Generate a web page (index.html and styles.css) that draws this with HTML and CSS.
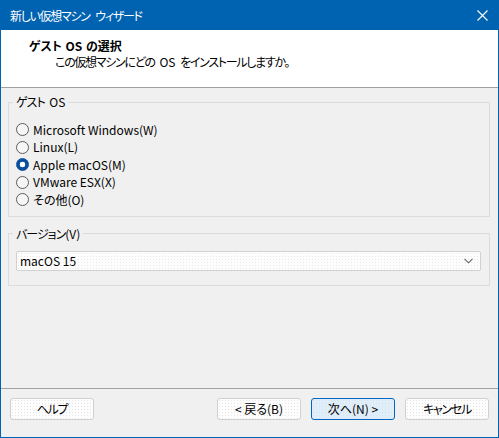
FILE: index.html
```html
<!DOCTYPE html>
<html lang="ja">
<head>
<meta charset="utf-8">
<title>新しい仮想マシン ウィザード</title>
<link rel="stylesheet" href="styles.css">
</head>
<body>
<div class="window">
  <div class="titlebar">
    <span class="title"><span class="jp">新しい仮想マシン</span> <span class="jp">ウィザード</span></span>
    <svg class="close" width="11" height="11" viewBox="0 0 11 11"><path d="M0.5 0.5 L10.5 10.5 M10.5 0.5 L0.5 10.5" stroke="#fff" stroke-width="1.1" fill="none"/></svg>
  </div>
  <div class="header">
    <div class="h-title">ゲスト OS の選択</div>
    <div class="h-sub"><span class="jp">この仮想マシンにどの</span> OS <span class="jp">をインストールしますか。</span></div>
  </div>
  <div class="content">
    <fieldset class="group group-os">
      <legend><span class="jp-s">ゲスト</span> OS</legend>
      <div class="radios">
        <div class="radio-row"><span class="radio"></span><span>Microsoft Windows(W)</span></div>
        <div class="radio-row"><span class="radio"></span><span>Linux(L)</span></div>
        <div class="radio-row"><span class="radio checked"></span><span>Apple macOS(M)</span></div>
        <div class="radio-row"><span class="radio"></span><span>VMware ESX(X)</span></div>
        <div class="radio-row"><span class="radio"></span><span>その他(O)</span></div>
      </div>
    </fieldset>
    <fieldset class="group group-ver">
      <legend><span class="jp-s">バージョン</span>(V)</legend>
      <div class="combo">
        <span>macOS 15</span>
        <svg class="chev" width="9" height="6" viewBox="0 0 9 6"><path d="M0.5 0.8 L4.5 4.8 L8.5 0.8" stroke="#606060" stroke-width="1.1" fill="none"/></svg>
      </div>
    </fieldset>
  </div>
  <div class="footer">
    <button class="btn"><span class="jp">ヘルプ</span></button>
    <div class="spacer"></div>
    <button class="btn">&lt; 戻る(B)</button>
    <button class="btn primary">次へ(N) &gt;</button>
    <button class="btn"><span class="jp">キャンセル</span></button>
  </div>
</div>
</body>
</html>
```

FILE: styles.css
```css
html, body {
  margin: 0;
  padding: 0;
  background: #ffffff;
}
body {
  font-family: "Noto Sans CJK JP", "Noto Sans", sans-serif;
  font-size: 12px;
  font-feature-settings: "palt";
  color: #000;
}
.jp {
  letter-spacing: -1.3px;
}
.jp-s {
  letter-spacing: -1px;
}
.window {
  width: 499px;
  height: 438px;
  box-sizing: border-box;
  border: 1px solid #0063b1;
  background: #f0f0f0;
  display: flex;
  flex-direction: column;
}
.titlebar {
  height: 29px;
  flex: none;
  background: #0063b1;
  color: #fff;
  display: flex;
  align-items: center;
  padding-left: 9px;
  padding-right: 10px;
}
.title {
  flex: 1;
  line-height: 16px;
  word-spacing: 3px;
}
.close {
  display: block;
}
.header {
  flex: none;
  box-sizing: border-box;
  height: 58px;
  background: #fff;
  border-bottom: 1px solid #a0a0a0;
  padding-top: 8px;
}
.h-title {
  font-weight: bold;
  line-height: 16px;
  padding-left: 28px;
  word-spacing: 1px;
}
.h-sub {
  line-height: 16px;
  padding-left: 54px;
  word-spacing: 2px;
}
.content {
  flex: 1;
  padding: 0 8px 0 7px;
}
.group {
  margin: 0;
  border: 1px solid #dcdcdc;
  padding: 0 8px 0 7px;
  min-width: 0;
}
.group legend {
  padding: 0 3px;
  margin-left: -3px;
  line-height: 16px;
  height: 16px;
  word-spacing: 2px;
}
.group-os {
  margin-top: 6px;
  padding-top: 11px;
  padding-bottom: 7px;
}
.group-ver {
  margin-top: 9px;
  padding-top: 9px;
  padding-bottom: 14px;
}
.radio-row {
  height: 17.5px;
  display: flex;
  align-items: center;
  gap: 4px;
  line-height: 16px;
}
.radio {
  width: 13px;
  height: 13px;
  box-sizing: border-box;
  border-radius: 50%;
  border: 1px solid #5c5c5c;
  background: #f6f6f6;
  flex: none;
}
.radio.checked {
  border-color: #0a4f9f;
  background: radial-gradient(circle, #ffffff 0 2.6px, #0a4f9f 3.1px);
}
.combo {
  height: 20px;
  box-sizing: border-box;
  border: 1px solid #d0d0d0;
  border-radius: 2px;
  background-color: #fdfdfd;
  background-image: radial-gradient(circle, #e8e8e8 0.6px, transparent 0.9px);
  background-size: 3px 3px;
  display: flex;
  align-items: center;
  padding: 0 7px 0 3px;
  line-height: 16px;
}
.combo span {
  flex: 1;
}
.chev {
  display: block;
  margin-top: 1px;
}
.footer {
  flex: none;
  border-top: 1px solid #a0a0a0;
  display: flex;
  align-items: flex-start;
  gap: 10px;
  padding: 9px 9px 0 9px;
  height: 39px;
}
.spacer {
  flex: 1;
}
.btn {
  width: 84px;
  height: 22px;
  box-sizing: border-box;
  margin: 0;
  padding: 0;
  font: inherit;
  color: #000;
  line-height: 16px;
  border: 1px solid #d0d0d0;
  border-radius: 3px;
  background-color: #fdfdfd;
  background-image: radial-gradient(circle, #e6e6e6 0.6px, transparent 0.9px);
  background-size: 3px 3px;
}
.btn.primary {
  border-color: #0067c0;
  background-color: #e0eef9;
  background-image: radial-gradient(circle, #d2e3f2 0.6px, transparent 0.9px);
}
```
